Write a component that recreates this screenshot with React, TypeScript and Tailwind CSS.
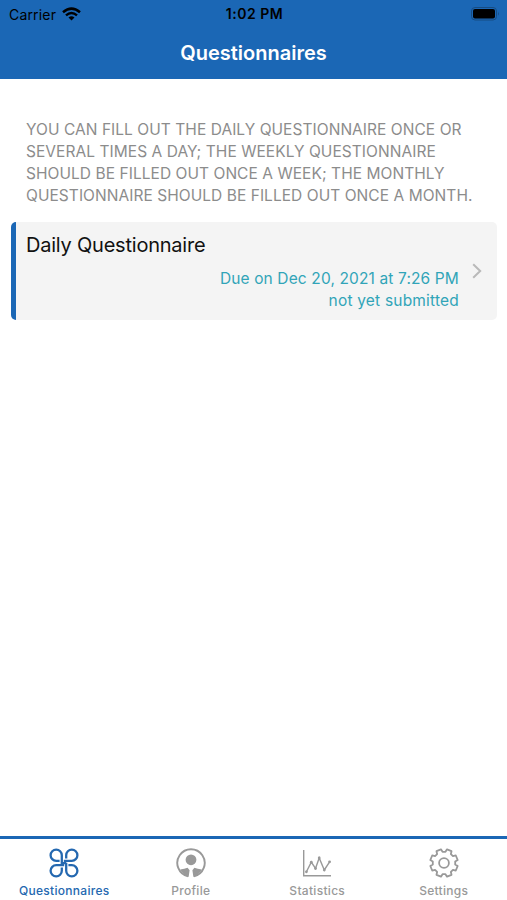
import type { ReactNode } from 'react';

// Four loops joined in the middle
function LoopsIcon() {
  return (
    <svg width="30" height="30" viewBox="0 0 30 30" fill="none" stroke="currentColor" strokeWidth="2.3" aria-hidden="true">
      <path d="M10.6 12.8H7.2A5.6 5.6 0 1 1 12.8 7.2V15.2H17.2" />
      <path d="M17.2 10.6V7.2A5.6 5.6 0 1 1 22.8 12.8H14.8" />
      <path d="M19.4 17.2H22.8A5.6 5.6 0 1 1 17.2 22.8V14.8" />
      <path d="M12.8 19.4V22.8A5.6 5.6 0 1 1 7.2 17.2H15.2" />
    </svg>
  );
}

// Person inside an open ring
function ProfileIcon() {
  return (
    <svg width="30" height="30" viewBox="0 0 30 30" aria-hidden="true">
      <path d="M12 28.3A13.7 13.7 0 1 1 18 28.3" fill="none" stroke="currentColor" strokeWidth="1.9" />
      <circle cx="15" cy="11.8" r="5.4" fill="currentColor" />
      <path d="M4.2 21.6Q8.5 20.9 11.6 19.8L13.6 22.3L12.6 29Q7.5 27.4 4.2 21.6Z" fill="currentColor" />
      <path d="M25.8 21.6Q21.5 20.9 18.4 19.8L16.4 22.3L17.4 29Q22.5 27.4 25.8 21.6Z" fill="currentColor" />
    </svg>
  );
}

function StatisticsIcon() {
  return (
    <svg width="30" height="30" viewBox="0 0 30 30" fill="none" stroke="currentColor" aria-hidden="true">
      <path d="M1.7 2V27.7H29" strokeWidth="1.4" />
      <path d="M4.4 23.8L9.3 14.2L13.5 20.5L17.2 10L22.3 22L27.6 13.8" strokeWidth="1.4" />
      <g fill="currentColor" stroke="none">
        <circle cx="4.4" cy="23.8" r="1.4" />
        <circle cx="9.3" cy="14.2" r="1.4" />
        <circle cx="13.5" cy="20.5" r="1.4" />
        <circle cx="17.2" cy="10" r="1.4" />
        <circle cx="22.3" cy="22" r="1.4" />
        <circle cx="27.6" cy="13.8" r="1.4" />
      </g>
    </svg>
  );
}

// Gear outline, one point per corner of each of the eight teeth
const gearPoints = Array.from( { length: 8 }, ( _, idx ) => {
  const middle = idx * 45 + 22.5;
  return [[-15, 11.3], [-10, 14], [10, 14], [15, 11.3]].map( ( [offset, radius] ) => {
    const angle = ( middle + offset ) * Math.PI / 180;
    return `${ ( 15 + radius * Math.sin( angle ) ).toFixed( 2 ) },${ ( 15 - radius * Math.cos( angle ) ).toFixed( 2 ) }`;
  } ).join( ' ' );
} ).join( ' ' );

function SettingsIcon() {
  return (
    <svg width="30" height="30" viewBox="0 0 30 30" fill="none" stroke="currentColor" strokeWidth="1.8" strokeLinejoin="round" aria-hidden="true">
      <polygon points={gearPoints} />
      <circle cx="15" cy="15" r="4.9" />
    </svg>
  );
}

function StatusBar() {
  return (
    <div className="grid h-7 grid-cols-3 items-center pl-[9px] pr-[7px] text-[14px] text-black">
      <div className="flex items-center gap-[6px]">
        <span className="tracking-[0.18px]">Carrier</span>
        <svg className="-mt-px" width="19" height="14" viewBox="0 0 19 14" fill="none" stroke="currentColor" strokeWidth="2.5" aria-label="Wi-Fi">
          <path d="M1 5.2Q9.5 -2 18 5.2" />
          <path d="M4 8.4Q9.5 3.7 15 8.4" />
          <path d="M6.5 10.5Q9.5 8.2 12.5 10.5L9.5 13.5Z" fill="currentColor" stroke="none" />
        </svg>
      </div>
      <span className="-mt-px text-center font-semibold tracking-[0.5px]">1:02 PM</span>
      <svg className="-mt-px justify-self-end" width="29" height="14" viewBox="0 0 29 14" aria-label="Battery full">
        <rect x="0.5" y="0.5" width="25" height="12.5" rx="3.5" fill="none" stroke="#174c82" />
        <rect x="2" y="2" width="22" height="9.5" rx="2" fill="#000" />
        <path d="M27 4.6Q28.6 6.7 27 8.8Z" fill="#174c82" />
      </svg>
    </div>
  );
}

// Single questionnaire row with its due date and submission state
function QuestionnaireCard( { title, due, status }: { title: string, due: string, status: string } ) {
  return (
    <button className="mr-[10px] ml-[11px] mt-[15px] flex h-[98px] items-center overflow-hidden rounded-[5px] border-l-[5px] border-[#1b67b5] bg-[#f4f4f4] pl-[10px] pr-[15px]">
      <div className="flex flex-1 flex-col pt-[2px]">
        <span className="text-left text-[20px] leading-[26px] tracking-[-0.22px] text-[#111]">{title}</span>
        <span className="mt-[10px] text-right text-[15.5px] leading-[22px] tracking-[0.13px] text-[#31a4b8]">{due}</span>
        <span className="text-right text-[15.5px] leading-[22px] tracking-[0.2px] text-[#31a4b8]">{status}</span>
      </div>
      <svg className="ml-[13px]" width="10" height="16" viewBox="0 0 10 16" fill="none" stroke="#b9b9b9" strokeWidth="2" aria-hidden="true">
        <path d="M1.2 1.2L8.2 8L1.2 14.8" />
      </svg>
    </button>
  );
}

const tabs: { label: string, icon: ReactNode, active?: boolean }[] = [
  { label: 'Questionnaires', icon: <LoopsIcon />, active: true },
  { label: 'Profile', icon: <ProfileIcon /> },
  { label: 'Statistics', icon: <StatisticsIcon /> },
  { label: 'Settings', icon: <SettingsIcon /> },
];

function App() {
  return (
    <div className="flex h-screen flex-col bg-white font-['Inter','Liberation_Sans',sans-serif]">
      <header className="h-[79px] bg-[#1b67b5]">
        <StatusBar />
        <h1 className="text-center text-[20px] leading-[50px] font-semibold text-white">Questionnaires</h1>
      </header>
      <main className="flex flex-1 flex-col">
        <p className="mt-[40px] px-[26px] text-[15.5px] leading-[22px] tracking-[0.05px] whitespace-nowrap text-[#8c8c8c] uppercase">
          You can fill out the daily questionnaire once or<br />
          several times a day; the weekly questionnaire<br />
          should be filled out once a week; the monthly<br />
          questionnaire should be filled out once a month.
        </p>
        <QuestionnaireCard title="Daily Questionnaire" due="Due on Dec 20, 2021 at 7:26 PM" status="not yet submitted" />
      </main>
      {/* Bottom tabs */}
      <nav className="grid h-16 grid-cols-4 border-t-[3px] border-[#1b67b5] pl-px">
        {tabs.map( ( { label, icon, active } ) => (
          <button key={label} className={`flex flex-col items-center pt-[9px] ${ active ? 'text-[#2468b0]' : 'text-[#999]' }`}>
            {icon}
            <span className="mt-[5px] text-[12px] leading-[16px] font-medium tracking-[0.3px]">{label}</span>
          </button>
        ) )}
      </nav>
    </div>
  );
}

export default App;
